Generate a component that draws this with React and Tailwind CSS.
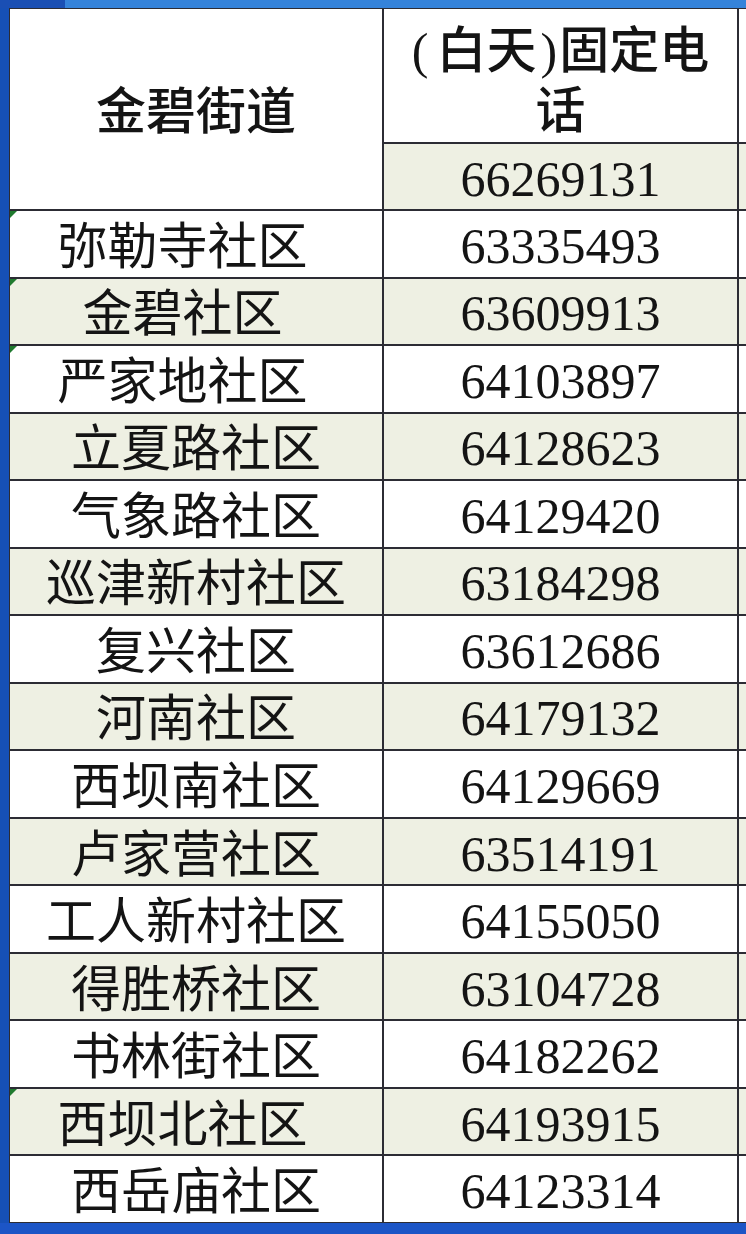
const rows = [
  { name: "弥勒寺社区", phone: "63335493", flag: true },
  { name: "金碧社区", phone: "63609913", flag: true },
  { name: "严家地社区", phone: "64103897", flag: true },
  { name: "立夏路社区", phone: "64128623" },
  { name: "气象路社区", phone: "64129420" },
  { name: "巡津新村社区", phone: "63184298" },
  { name: "复兴社区", phone: "63612686" },
  { name: "河南社区", phone: "64179132" },
  { name: "西坝南社区", phone: "64129669" },
  { name: "卢家营社区", phone: "63514191" },
  { name: "工人新村社区", phone: "64155050" },
  { name: "得胜桥社区", phone: "63104728" },
  { name: "书林街社区", phone: "64182262" },
  { name: "西坝北社区", phone: "64193915", flag: true },
  { name: "西岳庙社区", phone: "64123314" },
];

const Flag = () => (
  <span className="absolute top-0 left-0 w-0 h-0 border-t-[7px] border-r-[7px] border-t-[#1f7a2e] border-r-transparent" />
);

export default function App() {
  return (
    <div
      className="w-[746px] h-[1234px] flex flex-col bg-white text-[#141414]"
      style={{ fontFamily: '"Liberation Serif", "Noto Sans CJK SC", serif' }}
    >
      <div className="h-[8px] flex">
        <div className="w-[65px] bg-[#1a4fb4]" />
        <div className="flex-1 bg-[#3583da]" />
      </div>
      <div className="flex-1 flex min-h-0">
        <div className="w-[9px] bg-[#1650b6]" />
        <div className="flex-1 grid grid-cols-[372px_353px_1fr] grid-rows-[133px_65px_repeat(15,1fr)] gap-[2px] bg-[#2c2c34] pt-[1px] pl-[1px] pb-[1px]">
          <div className="row-span-2 bg-white flex items-center justify-center text-[50px] font-medium pt-[6px]">
            金碧街道
          </div>
          <div className="bg-white flex flex-col items-center justify-center text-[50px] font-medium leading-[60px] pt-[10px]">
            <span>
              <span className="mr-[8px] font-normal">(</span>白天<span className="ml-[4px] mr-[2px] font-normal">)</span>固定电
            </span>
            <span>话</span>
          </div>
          <div className="bg-white" />
          <div className="bg-[#eef0e3] flex items-center justify-center text-[50px] pt-[6px]">
            66269131
          </div>
          <div className="bg-[#eef0e3]" />
          {rows.map((r, i) => {
            const bg = i % 2 === 1 ? "bg-[#eef0e3]" : "bg-white";
            return [
              <div
                key={r.name}
                className={`${bg} relative flex items-center justify-center text-[50px] leading-none pt-[6px] ${r.flag ? "pr-[27px]" : ""}`}
              >
                {r.flag && <Flag />}
                {r.name}
              </div>,
              <div
                key={r.phone}
                className={`${bg} flex items-center justify-center text-[50px] leading-none pt-[4px]`}
              >
                {r.phone}
              </div>,
              <div key={r.name + "x"} className={bg} />,
            ];
          })}
        </div>
      </div>
      <div className="h-[11px] bg-[#1c55c6]" />
    </div>
  );
}
